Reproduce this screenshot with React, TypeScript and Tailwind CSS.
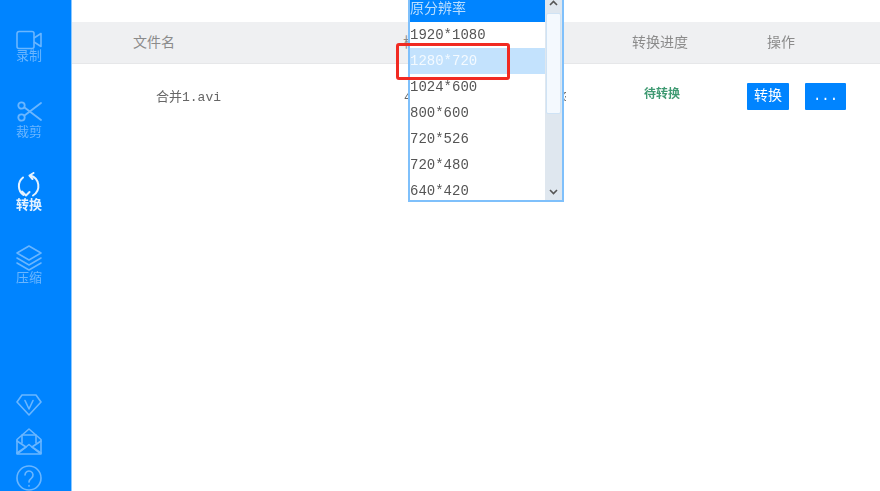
import React from 'react';

const songti = { fontFamily: '"Liberation Mono", "Noto Sans CJK SC", monospace' };

const VideoIcon = () => (
  <svg width="26" height="20" viewBox="0 0 26 20" fill="none" stroke="currentColor" strokeWidth="1.6" strokeLinejoin="round">
    <path d="M3 1.5h13a2 2 0 0 1 2 2v13a2 2 0 0 1-2 2H3a2 2 0 0 1-2-2v-13a2 2 0 0 1 2-2z" />
    <path d="M18 8l7-4.5v13L18 12" />
  </svg>
);

const ScissorsIcon = () => (
  <svg width="25" height="21" viewBox="0 0 25 21" fill="none" stroke="currentColor" strokeWidth="1.8" strokeLinecap="round">
    <circle cx="4.5" cy="4.5" r="3.2" />
    <circle cx="4.5" cy="16.5" r="3.2" />
    <path d="M7.5 6.5L24 19" />
    <path d="M7.5 14.5L24 2" />
  </svg>
);

const RotateIcon = () => (
  <svg width="26" height="27" viewBox="0 0 26 27" fill="none" stroke="currentColor" strokeWidth="2" strokeLinecap="round" strokeLinejoin="round">
    <path d="M7 5.5A11 11 0 0 0 7.5 23" />
    <path d="M14.5 3.5A11 11 0 0 1 17 23.5" />
    <path d="M17.5 1L13.5 3.5L16.5 7" />
    <path d="M6 19.5L10 23.5L13.5 20" />
  </svg>
);

const LayersIcon = () => (
  <svg width="26" height="26" viewBox="0 0 26 26" fill="none" stroke="currentColor" strokeWidth="1.5" strokeLinejoin="round" strokeLinecap="round">
    <path d="M13 1L25 8L13 15L1 8z" />
    <path d="M1 13L13 20L25 13" />
    <path d="M1 18L13 25L25 18" />
  </svg>
);

const DiamondIcon = () => (
  <svg width="26" height="22" viewBox="0 0 26 22" fill="none" stroke="currentColor" strokeWidth="1.6" strokeLinejoin="round" strokeLinecap="round">
    <path d="M6 1h14l5 7-12 13L1 8z" />
    <path d="M9 6.5l4 8.5 4-8.5" />
  </svg>
);

const MailIcon = () => (
  <svg width="26" height="27" viewBox="0 0 26 27" fill="none" stroke="currentColor" strokeWidth="1.6" strokeLinejoin="round" strokeLinecap="round">
    <path d="M1 11.5L13 1l12 10.5V26H1z" />
    <path d="M6 15V7h14v8" />
    <path d="M1 13l9 6-9 6" />
    <path d="M25 13l-9 6 9 6" />
    <path d="M2 25.5L13 16.5l11 9" />
  </svg>
);

const HelpIcon = () => (
  <svg width="26" height="26" viewBox="0 0 26 26" fill="none" stroke="currentColor" strokeWidth="1.6" strokeLinecap="round">
    <circle cx="13" cy="13" r="12" />
    <path d="M9 10a4 4 0 1 1 6.5 3.1c-1.6 1.2-2.5 2-2.5 4" />
    <path d="M13 20.5v.6" />
  </svg>
);

const options = ['1920*1080', '1280*720', '1024*600', '800*600', '720*526', '720*480', '640*420'];

export default function App() {
  return (
    <div className="relative flex h-[491px] w-[880px] overflow-hidden bg-white">
      <aside className="flex w-[72px] shrink-0 flex-col justify-between border-r border-[#8cc8ff] bg-[#0084ff] pr-[13px] pt-[30px] text-[#6ab6ff] blur-[0.5px]">
        <nav className="flex flex-col">
          <div className="flex h-[71px] flex-col items-center">
            <VideoIcon />
            <span className="text-[13px] leading-[14px]" style={songti}>录制</span>
          </div>
          <div className="flex h-[71px] flex-col items-center">
            <ScissorsIcon />
            <span className="mt-[4px] text-[13px] leading-[14px]" style={songti}>裁剪</span>
          </div>
          <div className="flex h-[73px] flex-col items-center text-[#e4f2ff]">
            <RotateIcon />
            <span className="text-[13px] font-bold leading-[14px]" style={songti}>转换</span>
          </div>
          <div className="flex flex-col items-center">
            <LayersIcon />
            <span className="mt-[1px] text-[13px] leading-[14px]" style={songti}>压缩</span>
          </div>
        </nav>
        <div className="flex flex-col items-center">
          <DiamondIcon />
          <div className="mt-[12px] flex"><MailIcon /></div>
          <div className="mt-[10px] flex"><HelpIcon /></div>
        </div>
      </aside>

      <main className="flex-1 pt-[22px] blur-[0.5px]" style={songti}>
        <div className="flex h-[42px] items-center border-b border-[#e6e7e9] bg-[#eff0f2] pt-[2px] text-[14px] text-[#8b8b8b]">
          <span className="ml-[61px] w-[270px]">文件名</span>
          <span className="w-[229px]">
            <span className="block w-[5px] overflow-hidden whitespace-nowrap">格</span>
          </span>
          <span className="w-[135px]">转换进度</span>
          <span>操作</span>
        </div>
        <div className="flex h-[65px] items-center text-[13px] text-[#666]">
          <span className="ml-[84px] w-[248px] pt-[2px]">合并1.avi</span>
          <span className="w-[158px] pt-[2px]">
            <span className="block w-[5px] overflow-hidden">4</span>
          </span>
          <span className="w-[82px] pt-[2px]">
            <span className="block w-[4px] overflow-hidden">0</span>
          </span>
          <span className="w-[103px] pb-[4px] text-[12px] font-bold text-[#3f9a72]">待转换</span>
          <button className="h-[27px] w-[42px] rounded-[1px] bg-[#0084ff] text-[14px] text-white">转换</button>
          <button className="ml-[16px] h-[27px] w-[41px] rounded-[1px] bg-[#0084ff] text-[14px] text-white">...</button>
        </div>
      </main>

      {/* resolution dropdown */}
      <div className="absolute left-[408px] top-0 flex h-[202px] w-[156px] border-x-2 border-b-2 border-[#7fc0fb] bg-white blur-[0.5px]" style={songti}>
        <ul className="flex-1 overflow-hidden text-[14px] leading-[26px] text-[#555]">
          <li className="h-[22px] bg-[#0084ff] leading-[18px] text-[#b9deff]">原分辨率</li>
          {options.map((o) => (
            <li key={o} className={o === '1280*720' ? 'h-[26px] bg-[#c3e2fd] text-[#f4faff]' : 'h-[26px]'}>
              {o}
            </li>
          ))}
        </ul>
        <div className="flex w-[17px] flex-col items-center justify-between bg-[#dfe7ef] text-[#555]">
          <div className="flex h-[13px] w-full items-start justify-center">
            <svg width="9" height="6" viewBox="0 0 9 6" fill="none" stroke="currentColor" strokeWidth="1.6"><path d="M1 5l3.5-3.5L8 5" /></svg>
          </div>
          <div className="mb-auto h-[101px] w-[15px] rounded-[2px] border border-[#cfe3f5] bg-[#f4f9fe]" />
          <div className="flex h-[16px] w-full items-center justify-center">
            <svg width="9" height="6" viewBox="0 0 9 6" fill="none" stroke="currentColor" strokeWidth="1.6"><path d="M1 1l3.5 3.5L8 1" /></svg>
          </div>
        </div>
      </div>

      {/* red annotation box */}
      <div className="absolute left-[396px] top-[43px] h-[37px] w-[114px] rounded-[3px] border-[3px] border-[#f12a22]" />
    </div>
  );
}
